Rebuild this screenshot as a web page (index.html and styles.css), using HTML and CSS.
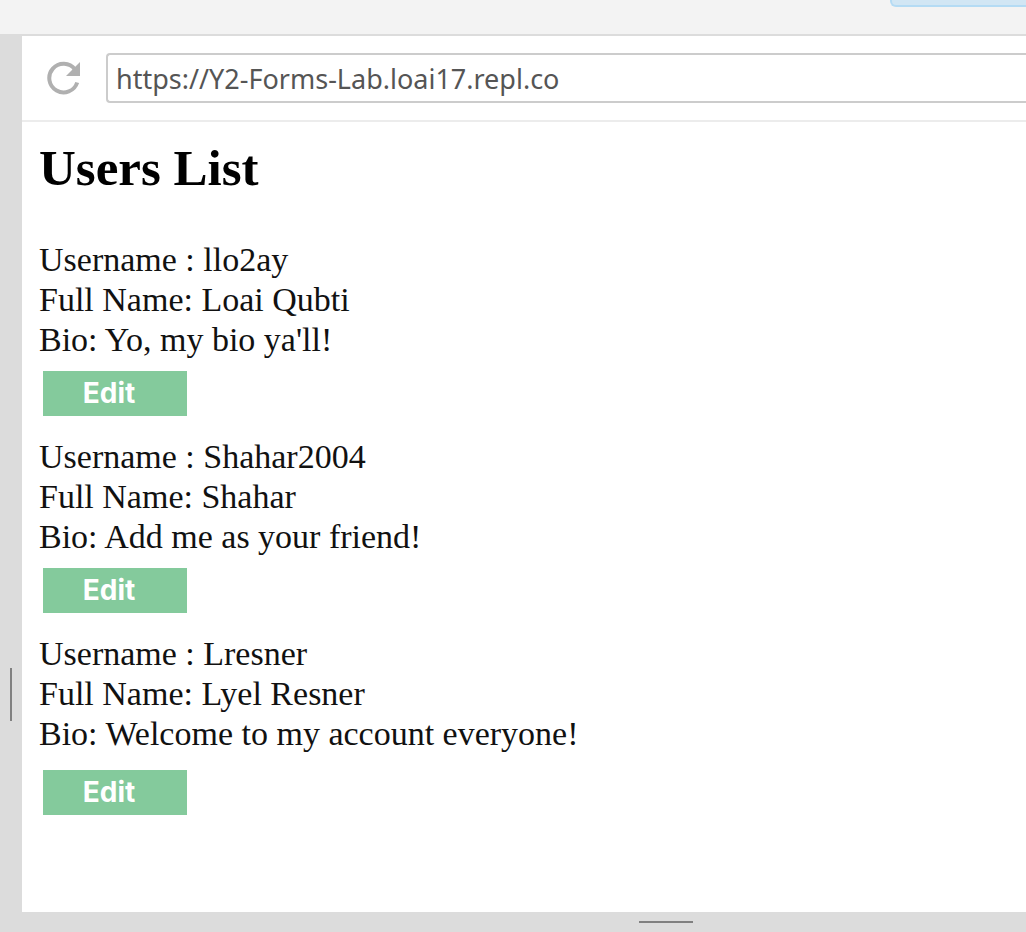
FILE: index.html
```html
<!DOCTYPE html>
<html lang="en">
<head>
<meta charset="utf-8">
<title>Users List</title>
<link rel="stylesheet" href="styles.css">
</head>
<body>
<div class="workspace">
  <header class="topbar"><button class="run" type="button" aria-label="Run"></button></header>
  <div class="main">
    <div class="divider"><span class="grip-vertical"></span></div>
    <section class="preview">
      <div class="toolbar">
        <button class="reload" type="button" aria-label="Reload">
          <svg viewBox="0 0 36 36" width="36" height="36"><path d="M29 9.500A14.300 14.300 0 1 0 31.200 22.500" fill="none" stroke="#b0b0b0" stroke-width="4"/><path d="M34 2v14H20z" fill="#b0b0b0"/></svg>
        </button>
        <input class="address" type="text" aria-label="Address" value="https://Y2-Forms-Lab.loai17.repl.co">
      </div>
      <main class="page">
        <h1 class="title">Users List</h1>
        <article class="user">
          <p class="details">Username : llo2ay<br>Full Name: Loai Qubti<br>Bio: Yo, my bio ya'll!</p>
          <button class="edit" type="button">Edit</button>
        </article>
        <article class="user">
          <p class="details">Username : Shahar2004<br>Full Name: Shahar<br>Bio: Add me as your friend!</p>
          <button class="edit" type="button">Edit</button>
        </article>
        <article class="user">
          <p class="details">Username : Lresner<br>Full Name: Lyel Resner<br>Bio: Welcome to my account everyone!</p>
          <button class="edit" type="button">Edit</button>
        </article>
      </main>
    </section>
  </div>
  <footer class="bottombar"><span class="grip-horizontal"></span></footer>
</div>
</body>
</html>
```
FILE: styles.css
```css
* { box-sizing: border-box; }
body { margin: 0; background: #dcdcdc; }
.workspace { display: flex; flex-direction: column; min-height: 100vh; }
.topbar { height: 36px; background: #f3f3f3; border-bottom: 2px solid #dcdcdc; display: flex; justify-content: flex-end; align-items: flex-start; }
.run { width: 136px; height: 7px; padding: 0; background: #d1e6f4; border: 2px solid #b4dbf4; border-width: 0 0 2px 2px; border-radius: 0 0 0 6px; }
.main { flex: 1; display: flex; }
.divider { width: 22px; display: flex; justify-content: center; align-items: flex-start; padding-top: 632px; }
.grip-vertical { width: 2px; height: 53px; background: #808080; }
.preview { flex: 1; min-width: 0; background: #fff; }
.toolbar { height: 86px; display: flex; align-items: center; gap: 24px; padding-left: 24px; border-bottom: 2px solid #ececec; }
.reload { width: 36px; height: 36px; padding: 0; border: 0; background: none; }
.reload svg { display: block; }
.address { flex: 1; min-width: 0; height: 50px; padding: 0 8px; border: 2px solid #ccc; border-right: 0; border-radius: 4px 0 0 4px; color: #555; font: 27px "Noto Sans", sans-serif; }
.page { padding: 18px 17px; font-family: "Liberation Serif", "Times New Roman", serif; color: #111; }
.title { margin: 0 0 44px; color: #000; font-size: 51px; line-height: 56px; }
.user { margin-bottom: 21px; }
.details { margin: 0; font-size: 34px; line-height: 40px; }
.edit { display: block; width: 144px; height: 45px; margin: 11px 0 0 4px; padding: 0 12px 2px 0; border: 0; background: #84ca9c; color: #fff; font: bold 28px Inter, sans-serif; }
.user:last-child .edit { margin-top: 16px; }
.bottombar { height: 20px; display: flex; justify-content: center; align-items: center; padding-left: 306px; }
.grip-horizontal { width: 54px; height: 2px; background: #808080; }
```
